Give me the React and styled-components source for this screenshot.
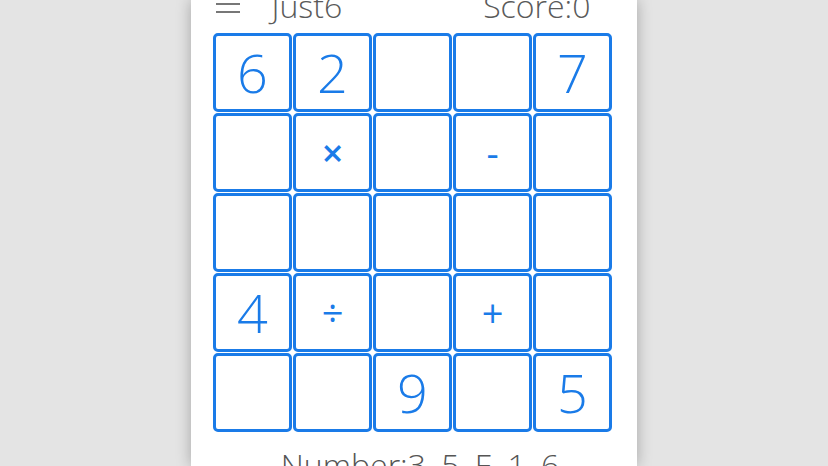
import styled, { createGlobalStyle } from 'styled-components'

const GlobalStyle = createGlobalStyle`
    html, body {
        margin: 0;
        padding: 0;
        height: 100%;
        overflow: hidden;
        background: #e4e4e4;
    }
    #root {
        height: 100%;
    }
`

const Page = styled.div`
    height: 466px;
    display: flex;
    justify-content: center;
    font-family: "Open Sans", "Liberation Sans", sans-serif;
`

const Panel = styled.div`
    width: 446px;
    height: 100%;
    background: #ffffff;
    box-shadow: 0 0 14px rgba(0, 0, 0, 0.28);
    display: flex;
    flex-direction: column;
    align-items: center;
`

const Header = styled.header`
    width: 400px;
    height: 33px;
    display: flex;
    align-items: flex-end;
    padding-left: 3px;
    box-sizing: border-box;
    color: #5a5a5a;
    margin-right: 3px;
`

const Menu = styled.div`
    width: 24px;
    display: flex;
    flex-direction: column;
    gap: 6px;
    margin-bottom: 20px;
    & span {
        display: block;
        height: 2px;
        background: #777;
    }
`

const Title = styled.div`
    font-size: 32px;
    font-weight: 300;
    line-height: 32px;
    margin-bottom: 11px;
    margin-left: ${p => p.$left || 0}px;
    margin-right: ${p => p.$right || 0}px;
`

const Spacer = styled.div`
    flex: 1;
`

const Grid = styled.div`
    display: grid;
    grid-template-columns: repeat(5, 79px);
    grid-auto-rows: 79px;
    gap: 1px;
    margin-right: 3px;
`

const Cell = styled.div`
    border: 3px solid #1a7be8;
    border-radius: 5px;
    display: flex;
    align-items: center;
    justify-content: center;
    color: #1a7be8;
    font-size: ${p => (p.$op ? '38px' : '54px')};
    font-weight: ${p => (p.$bold ? 600 : p.$op ? 400 : 300)};
    line-height: 1;
    padding-bottom: 2px;
`

const Footer = styled.div`
    margin-top: 11px;
    font-size: 32px;
    font-weight: 300;
    color: #555;
    margin-left: 12px;
    white-space: nowrap;
`

const cells = [
    '6', '2', '', '', '7',
    '', '×', '', '-', '',
    '', '', '', '', '',
    '4', '÷', '', '+', '',
    '', '', '9', '', '5'
]

const ops = ['×', '÷', '+', '-']

export default function App() {
    return (
        <>
            <GlobalStyle />
            <Page>
                <Panel>
                    <Header>
                        <Menu>
                            <span />
                            <span />
                            <span />
                        </Menu>
                        <Title $left={32}>Just6</Title>
                        <Spacer />
                        <Title $right={22}>Score:0</Title>
                    </Header>
                    <Grid>
                        {cells.map((c, i) => (
                            <Cell key={i} $op={ops.includes(c)} $bold={c === '×'}>{c}</Cell>
                        ))}
                    </Grid>
                    <Footer>Number:3, 5, E, 1, 6</Footer>
                </Panel>
            </Page>
        </>
    )
}
